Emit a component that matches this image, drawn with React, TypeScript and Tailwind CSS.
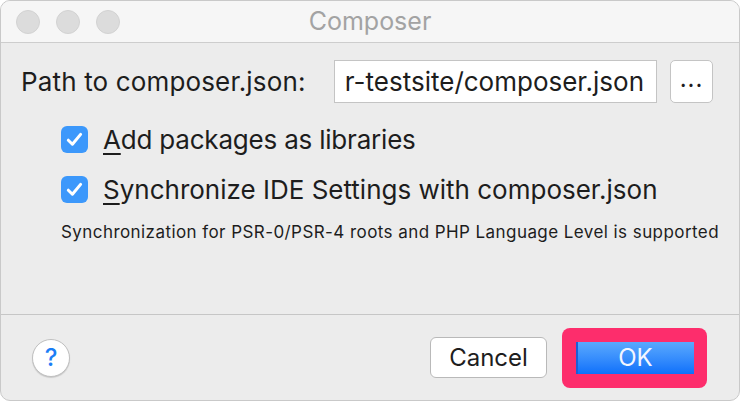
import React from "react";

const font = { fontFamily: 'Inter, "Liberation Sans", sans-serif' };

function Check() {
  return (
    <div className="flex h-[27px] w-[27px] shrink-0 items-center justify-center rounded-[6px] bg-[#3c98fb]">
      <svg width="17" height="15" viewBox="0 0 17 15" fill="none">
        <path d="M2.3 8.2 L6.4 12.2 L14.6 2.4" stroke="white" strokeWidth="3" strokeLinecap="round" strokeLinejoin="round" />
      </svg>
    </div>
  );
}

export default function App() {
  return (
    <div className="h-[402px] w-[740px] bg-white text-[#1d1d1d]" style={font}>
      <div className="flex h-[401px] flex-col overflow-hidden rounded-[10px] border border-[#c9c9c9] bg-[#ececec]">
        {/* title bar */}
        <div className="relative flex h-[42px] shrink-0 items-center border-b border-[#cdcdcd] bg-[#f6f6f6]">
          <div className="ml-[15px] flex gap-[16px]">
            <span className="h-[24px] w-[24px] rounded-full border border-[#d2d2d2] bg-[#dcdcdc]" />
            <span className="h-[24px] w-[24px] rounded-full border border-[#d2d2d2] bg-[#dcdcdc]" />
            <span className="h-[24px] w-[24px] rounded-full border border-[#d2d2d2] bg-[#dcdcdc]" />
          </div>
          <div className="absolute inset-0 flex items-center justify-center text-[25px] text-[#a3a3a3]">
            Composer
          </div>
        </div>

        {/* body */}
        <div className="flex h-[271px] shrink-0 flex-col pl-[20px] pt-[17px]">
          <div className="flex h-[43px] items-center">
            <div className="w-[313px] text-[26px] leading-[32px] tracking-[0.15px]">Path to composer.json:</div>
            <div className="flex h-[43px] w-[323px] items-center justify-end overflow-hidden whitespace-nowrap border border-[#c4c4c4] bg-white pr-[12px] text-[26px] leading-[32px]">
              r-testsite/composer.json
            </div>
            <button className="ml-[13px] flex h-[43px] w-[43px] items-center justify-center rounded-[5px] border border-[#c4c4c4] bg-white pb-[6px] text-[24px] tracking-[1px]">
              ...
            </button>
          </div>

          <div className="mt-[23px] flex h-[27px] items-center gap-[15px] pl-[40px]">
            <Check />
            <span className="text-[26px] leading-[32px] tracking-[-0.2px]">
              <span className="underline decoration-[2px] underline-offset-[4px]">A</span>dd packages as libraries
            </span>
          </div>
          <div className="mt-[23px] flex h-[27px] items-center gap-[15px] pl-[40px]">
            <Check />
            <span className="text-[26px] leading-[32px]">
              <span className="underline decoration-[2px] underline-offset-[4px]">S</span>ynchronize IDE Settings with composer.json
            </span>
          </div>
          <div className="mt-[19px] whitespace-nowrap pl-[40px] text-[17px] leading-[20px] tracking-[0.43px]">
            Synchronization for PSR-0/PSR-4 roots and PHP Language Level is supported
          </div>
        </div>

        {/* footer */}
        <div className="flex flex-1 items-center border-t border-[#c6c6c6] pl-[31px] pr-[32px]">
          <button className="flex h-[38px] w-[38px] items-center justify-center rounded-full border border-[#c0c0c0] bg-white text-[24px] font-medium text-[#1b7ef6] shadow-[0_1px_1px_rgba(0,0,0,0.15)]">
            ?
          </button>
          <div className="flex-1" />
          <button className="flex h-[41px] w-[117px] items-center justify-center rounded-[6px] border border-[#b9b9b9] bg-white text-[24px] text-[#1d1d1d]">
            Cancel
          </button>
          <div className="ml-[15px] flex h-[60px] w-[145px] items-center justify-center rounded-[8px] bg-[#fd2d6c]">
            <button className="flex h-[32px] w-[118px] items-center justify-center border-l-2 border-[#1b5fd6] bg-gradient-to-b from-[#5aa9fd] to-[#0b70fb] text-[24px] text-[#f4f6ff]">
              OK
            </button>
          </div>
        </div>
      </div>
    </div>
  );
}
